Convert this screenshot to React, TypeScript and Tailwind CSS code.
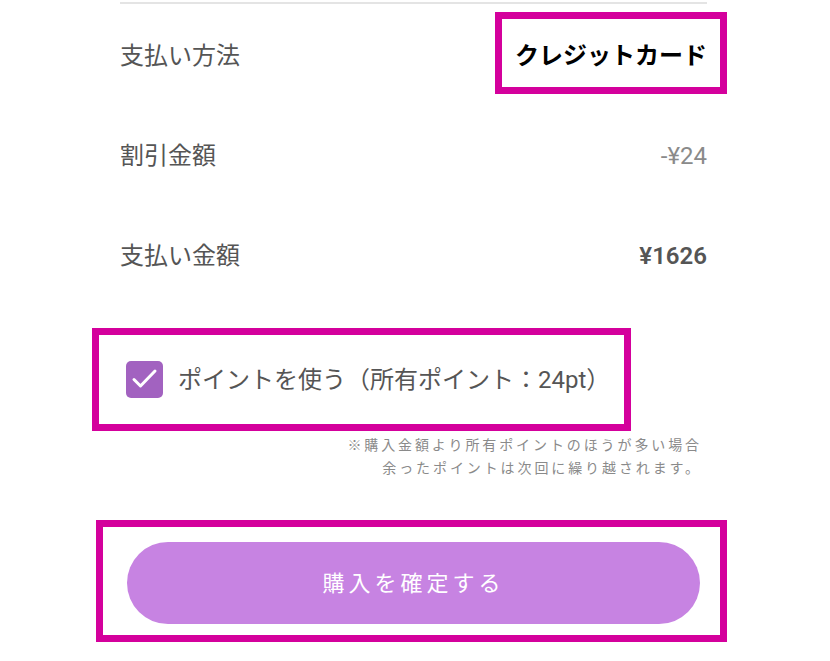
const rows = [
  { label: '支払い方法', value: 'クレジットカード', valueClass: 'text-black font-bold text-[24px]' },
  { label: '割引金額', value: '-¥24', valueClass: 'text-[#8a8a8a] text-[24px]' },
  { label: '支払い金額', value: '¥1626', valueClass: 'text-[#555] font-semibold text-[24px]' },
];

function Mark({ className }: { className: string }) {
  // annotation frame drawn over the screenshot
  return <div className={`absolute border-[7px] border-[#d4009c] pointer-events-none ${className}`} />;
}

export default function App() {
  return (
    <div className="relative w-[830px] h-[661px] bg-white font-['Roboto','Noto_Sans_CJK_JP',sans-serif] overflow-hidden">
      <div className="ml-[120px] w-[587px] pt-[2px]">
        <div className="border-t-2 border-[#e4e4e4]" />
        {rows.map((r) => (
          <div key={r.label} className="h-[100px] flex items-center justify-between pt-[4px]">
            <span className="text-[24px] text-[#555]">{r.label}</span>
            <span className={r.valueClass}>{r.value}</span>
          </div>
        ))}

        <div className="mt-[56px] flex items-center gap-[15px] ml-[6px]">
          <div className="w-[37px] h-[37px] rounded-[5px] bg-[#a262c0] flex items-center justify-center">
            <svg width="37" height="37" viewBox="0 0 37 37" fill="none">
              <path d="M8 18.5 L14.5 25 L29 10" stroke="white" strokeWidth="3" strokeLinecap="round" strokeLinejoin="round" />
            </svg>
          </div>
          <span className="text-[24px] text-[#555] pt-[2px]">ポイントを使う（所有ポイント：24pt）</span>
        </div>

        <div className="mt-[36px] mr-[5px] text-right text-[14px] leading-[23px] tracking-[2.9px] text-[#8a8a8a]">
          <p>※購入金額より所有ポイントのほうが多い場合</p>
          <p>余ったポイントは次回に繰り越されます。</p>
        </div>
      </div>

      <div className="mt-[62px] ml-[127px] w-[573px]">
        <button className="w-full h-[82px] rounded-full bg-[#c783e2] text-white text-[22px] tracking-[4px]">
          購入を確定する
        </button>
      </div>

      <Mark className="left-[495px] top-[12px] w-[232px] h-[82px]" />
      <Mark className="left-[92px] top-[328px] w-[539px] h-[103px]" />
      <Mark className="left-[96px] top-[520px] w-[631px] h-[122px]" />
    </div>
  );
}
